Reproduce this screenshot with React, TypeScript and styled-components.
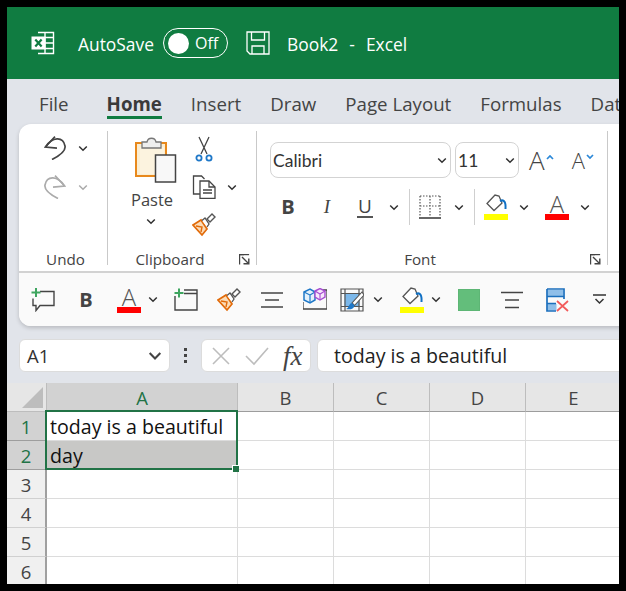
import React from "react";
import styled, { createGlobalStyle } from "styled-components";

const Global = createGlobalStyle`
  html, body { margin: 0; padding: 0; background: #000; }
  * { box-sizing: border-box; }
`;

const UI = `"Open Sans", "Noto Sans", "Liberation Sans", sans-serif`;

const Page = styled.div`
  width: 626px; height: 591px; background: #000; padding: 7px;
  font-family: ${UI}; color: #333;
`;
const Window = styled.div`
  width: 612px; height: 577px; overflow: hidden; background: #e1e4ea;
  display: flex; flex-direction: column;
`;
const TitleBar = styled.div`
  height: 72px; flex: none; background: #107c41; color: #fff; display: flex; align-items: center; padding-left: 24px;
`;
const TitleText = styled.span<{ $ml: number }>`
  font-size: 17.4px; margin-left: ${p => p.$ml}px; white-space: pre; word-spacing: 1px; color: #fff; padding-top: 1px;
`;
const Toggle = styled.div`
  width: 65px; height: 30px; margin-left: 9px; border: 1px solid #fff; border-radius: 15px;
  display: flex; align-items: center; padding-left: 4px; gap: 6px; font-size: 16px;
`;
const Knob = styled.div`
  width: 21px; height: 21px; border-radius: 50%; background: #fff;
`;
const Tabs = styled.div`
  height: 45px; flex: none; display: flex; padding: 12px 0 0 32px; gap: 29px; align-items: flex-start;
`;
const Tab = styled.div<{ $active?: boolean; $ml?: number }>`
  font-size: 18.7px; line-height: 25px; height: 28px; white-space: nowrap; margin-left: ${p => p.$ml || 0}px;
  font-weight: ${p => (p.$active ? 700 : 400)}; color: ${p => (p.$active ? "#3a3a3a" : "#444")};
  border-bottom: ${p => (p.$active ? "3px solid #107c41" : "3px solid transparent")};
`;
const Ribbon = styled.div`
  flex: none; width: 640px; height: 202px; margin: 0 0 0 12px; background: #fff; border-radius: 12px 0 0 12px;
  box-shadow: 0 2px 4px rgba(0,0,0,.18); display: flex; flex-direction: column; overflow: hidden;
`;
const Groups = styled.div`
  height: 149px; flex: none; display: flex; padding-top: 7px; border-bottom: 2px solid #d2d2d2;
`;
const Group = styled.div<{ $w: number }>`
  width: ${p => p.$w}px; flex: none; height: 134px; border-right: 1px solid #c9c9c9; position: relative;
  display: flex; flex-direction: column;
`;
const GroupBody = styled.div`
  flex: 1; display: flex; min-height: 0;
`;
const GroupLabel = styled.div<{ $pr?: number; $pl?: number }>`
  height: 12px; flex: none; font-size: 15.2px; line-height: 12px; text-align: center; color: #444;
  padding-right: ${p => p.$pr || 0}px; padding-left: ${p => p.$pl || 0}px;
`;
const Launcher = styled.svg`
  position: absolute; right: 6px; bottom: 0; width: 11px; height: 11px;
`;
const Col = styled.div<{ $ml?: number; $w?: number; $gap?: number; $mt?: number; $start?: boolean }>`
  display: flex; flex-direction: column; align-items: ${p => (p.$start ? "flex-start" : "center")};
  margin-left: ${p => p.$ml || 0}px; margin-top: ${p => p.$mt || 0}px;
  ${p => (p.$w ? `width: ${p.$w}px;` : "")} gap: ${p => p.$gap || 0}px;
`;
const Row = styled.div<{ $h?: number; $ml?: number; $mt?: number }>`
  display: flex; align-items: center;
  ${p => (p.$h ? `height: ${p.$h}px;` : "")}
  margin-left: ${p => p.$ml || 0}px; margin-top: ${p => p.$mt || 0}px;
`;
const Slot = styled.div<{ $ml?: number; $w?: number }>`
  flex: none; display: flex; align-items: center; justify-content: center;
  margin-left: ${p => p.$ml || 0}px; ${p => (p.$w ? `width: ${p.$w}px;` : "")}
`;
const PasteLabel = styled.div`
  font-size: 16.5px; line-height: 22px; color: #444; margin: 6px 8px 0 0;
`;
const PasteChevron = styled.div`
  margin: 7px 10px 0 0; display: flex;
`;
const Select = styled.div<{ $w: number; $ml?: number }>`
  width: ${p => p.$w}px; height: 36px; margin-left: ${p => p.$ml || 0}px; border: 1px solid #d3d3d3; border-radius: 8px; background: #fff;
  display: flex; align-items: center; justify-content: space-between; padding: 0 3px 0 2px;
  font-family: Lato, "Liberation Sans", sans-serif; font-size: 17.5px; color: #333; flex: none;
`;
const BigA = styled.span<{ $size: number }>`
  font-size: ${p => p.$size}px; line-height: 1; color: #444; font-weight: 300; font-family: ${UI};
`;
const Caret = styled.span`
  display: inline-block; margin-left: 1px; margin-bottom: 12px;
`;
const Style = styled.span<{ $b?: boolean; $i?: boolean; $u?: boolean }>`
  font-size: ${p => (p.$b ? 20 : 19)}px; line-height: 22px; color: #444; font-family: ${p => (p.$i ? `"Liberation Serif", serif` : UI)};
  font-weight: ${p => (p.$b ? 700 : 400)}; font-style: ${p => (p.$i ? "italic" : "normal")};
  ${p => (p.$u ? "border-bottom: 2px solid #555; padding: 0 1px; line-height: 19px;" : "")}
`;
const Sep = styled.div<{ $ml: number }>`
  width: 1px; height: 36px; background: #cfcfcf; margin-left: ${p => p.$ml}px; flex: none;
`;
const ColorIcon = styled.div`
  width: 24px; height: 26px; display: flex; flex-direction: column; align-items: center; justify-content: flex-end;
`;
const ColorBar = styled.div<{ $c: string }>`
  width: 24px; height: 6px; background: ${p => p.$c}; flex: none;
`;
const ColorA = styled.span`
  font-size: 24px; line-height: 20px; color: #555; font-weight: 300;
`;
const Qat = styled.div`
  flex: 1; background: #fafafa; display: flex; align-items: center; padding: 0 0 0 12px;
`;
const GreenSwatch = styled.div`
  width: 22px; height: 22px; background: #63be7b; border: 1px solid #5db675;
`;
const FormulaRow = styled.div`
  flex: none; height: 33px; margin: 13px 0 0 12px; display: flex; align-items: stretch;
`;
const NameBox = styled.div`
  width: 151px; flex: none; background: #fff; border: 1px solid #dcdcdc; border-radius: 6px; display: flex; align-items: center;
  justify-content: space-between; padding: 0 7px; font-size: 18.5px; color: #333;
`;
const DotsBox = styled.div`
  width: 31px; flex: none; display: flex; flex-direction: column; align-items: center; justify-content: center; gap: 3px;
`;
const Dot = styled.span`
  width: 3px; height: 3px; background: #444;
`;
const FnBox = styled.div`
  width: 110px; flex: none; background: #fff; border: 1px solid #dcdcdc; border-radius: 6px; display: flex; align-items: center; padding-left: 9px; gap: 14px;
`;
const Fx = styled.span`
  font-family: "Liberation Serif", serif; font-style: italic; font-size: 27px; line-height: 26px; color: #444;
`;
const FormulaInput = styled.div`
  width: 320px; flex: none; margin-left: 6px; background: #fff; border: 1px solid #dcdcdc; border-radius: 6px 0 0 6px;
  font-size: 19.6px; color: #222; display: flex; align-items: center; padding-left: 16px; white-space: nowrap;
`;
const Sheet = styled.div`
  flex: none; margin-top: 11px; position: relative; display: grid;
  grid-template-columns: 40px 191px 96px 96px 96px 96px;
  grid-template-rows: 29px repeat(6, 29px);
  background: #fff;
`;
const Corner = styled.div`
  background: #e6e6e6; border-right: 1px solid #bdbdbd; border-bottom: 1px solid #bdbdbd; display: flex; align-items: flex-end; justify-content: flex-end; padding: 0 3px 3px 0;
`;
const ColHead = styled.div<{ $sel?: boolean }>`
  background: ${p => (p.$sel ? "#d2d2d2" : "#e6e6e6")}; border-right: 1px solid #bdbdbd; border-bottom: 1px solid #9d9d9d;
  color: ${p => (p.$sel ? "#217346" : "#444")}; font-size: 18.5px; text-align: center; line-height: 30px;
`;
const RowHead = styled.div<{ $sel?: boolean }>`
  background: ${p => (p.$sel ? "#d2d2d2" : "#f0f0f0")}; border-right: 2px solid ${p => (p.$sel ? "#217346" : "#a0a0a0")}; border-bottom: 1px solid ${p => (p.$sel ? "#9e9e9e" : "#d0d0d0")};
  color: ${p => (p.$sel ? "#217346" : "#444")}; font-size: 18.5px; text-align: center; line-height: 29px;
`;
const Cell = styled.div<{ $fill?: boolean }>`
  background: ${p => (p.$fill ? "#c8c8c6" : "#fff")}; border-right: 1px solid #dcdcdc; border-bottom: 1px solid #dcdcdc;
  font-size: 19.6px; line-height: 29px; color: #111; padding-left: 3px; white-space: nowrap; overflow: hidden;
`;
const Selection = styled.div`
  position: absolute; left: 38px; top: 27px; width: 193px; height: 60px; border: 2px solid #217346; pointer-events: none;
`;
const Handle = styled.div`
  position: absolute; right: -3px; bottom: -4px; background: #217346; border-left: 1px solid #fff; border-top: 1px solid #fff;
  box-sizing: content-box; width: 6px; height: 6px;
`;

const Chev = ({ c = "#333", w = 10 }: { c?: string; w?: number }) => (
  <svg width={w} height={w * 0.7} viewBox="0 0 10 7" fill="none"><path d="M1.2 1.5 5 5.3 8.8 1.5" stroke={c} strokeWidth="1.5" /></svg>
);
const Excel = () => (
  <svg width="24" height="24" viewBox="0 0 24 24" fill="none">
    <path d="M7 1.500h15.500v21H7" stroke="#fff" strokeWidth="1.4" />
    <path d="M14 1.500v21M14 6.500h8.500M14 12h8.500M14 17.500h8.500" stroke="#fff" strokeWidth="1.4" />
    <rect x="0.5" y="5.5" width="14" height="13" fill="#fff" />
    <path d="M4.300 8.500 10.600 15.500M10.600 8.500 4.300 15.500" stroke="#107c41" strokeWidth="2.2" />
  </svg>
);
const Save = () => (
  <svg width="24" height="24" viewBox="0 0 24 24" fill="none" stroke="#fff" strokeWidth="1.3">
    <path d="M1 1h22v22H4l-3-3z" />
    <path d="M5.500 1v8h13V1M6 23v-8h12v8" />
  </svg>
);
const Undo = ({ flip, c }: { flip?: boolean; c: string }) => (
  <svg width="22" height="24" viewBox="0 0 22 24" fill="none" stroke={c} strokeWidth="1.7" style={flip ? { transform: "scaleX(-1)" } : undefined}>
    <path d="M11 0.600 1.300 11l11.700 1.200" />
    <path d="M2 10.500C8 1 19 0 21 10c1 5-6 10-13 13.500" />
  </svg>
);
const Launch = () => (
  <Launcher viewBox="0 0 11 11" fill="none" stroke="#444" strokeWidth="1.2">
    <path d="M5 .6H.6V10.500" /><path d="M3 3l6.500 6.500M9.800 4.500v5.300H4.500" strokeWidth="1.4" /><path d="M.6 .6h9.500" />
  </Launcher>
);
const Paste = () => (
  <svg width="42" height="46" viewBox="0 0 42 46" fill="none">
    <rect x="1" y="6" width="30" height="33" fill="#fbeed2" stroke="#e8891c" strokeWidth="2" />
    <rect x="5" y="10" width="24" height="27" fill="#fff" opacity=".3" />
    <path d="M7 5h5c1-5 8-5 9 0h5v6H7z" fill="#eee" stroke="#777" strokeWidth="1.3" />
    <rect x="20.500" y="18" width="20" height="27" fill="#f8f8f8" stroke="#444" strokeWidth="1.5" />
  </svg>
);
const Scissors = () => (
  <svg width="18" height="26" viewBox="0 0 18 26" fill="none">
    <path d="M4 1l8 17M14 1 6 18" stroke="#444" strokeWidth="1.3" />
    <circle cx="4" cy="22" r="2.6" stroke="#1f78c8" strokeWidth="1.8" />
    <circle cx="14" cy="22" r="2.6" stroke="#1f78c8" strokeWidth="1.8" />
  </svg>
);
const Copy = () => (
  <svg width="24" height="24" viewBox="0 0 24 24" fill="none" stroke="#444" strokeWidth="1.3">
    <path d="M9 19H1.500V1H9.500l3 3" />
    <path d="M8 6h9l6 6v11.300H8z" fill="#fff" />
    <path d="M17 6v6h6M11 15h9M11 18h9" />
  </svg>
);
const Brush = () => (
  <svg width="24" height="24" viewBox="0 0 24 24" fill="none">
    <path d="M1 12l8-5 6 9-5 6z" fill="#fbdcb8" stroke="#e26b0a" strokeWidth="1.7" />
    <path d="M4 13l6 1-1 5" stroke="#e26b0a" strokeWidth="1.4" />
    <path d="M10 7.500 13 5l4 6-2 3" fill="#fff" stroke="#555" strokeWidth="1.3" />
    <path d="M15 6l5-5 3 3-5 5z" fill="#fff" stroke="#555" strokeWidth="1.4" />
  </svg>
);
const Borders = () => (
  <svg width="22" height="24" viewBox="0 0 22 24" fill="none">
    <path d="M1 1h20M1 1v20M21 1v20M11 1v20M1 11h20" stroke="#555" strokeWidth="1.2" strokeDasharray="1.5 1.500" />
    <path d="M0 23h22" stroke="#333" strokeWidth="1.6" />
  </svg>
);
const Fill = () => (
  <svg width="24" height="20" viewBox="0 0 24 20" fill="none">
    <path d="M11 1 3 9.500l7 7 8-7.500-3-7z" fill="#fff" stroke="#555" strokeWidth="1.3" />
    <path d="M16 7c4-2 6 1 5.500 8" stroke="#1070c4" strokeWidth="2" />
  </svg>
);
const Comment = () => (
  <svg width="24" height="24" viewBox="0 0 24 24" fill="none">
    <path d="M9 3.500h14v14H9l-4 5v-5H2v-7" stroke="#444" strokeWidth="1.4" />
    <path d="M5 0v9M.5 4.500h9" stroke="#3ea55f" strokeWidth="2" />
  </svg>
);
const NewSheet = () => (
  <svg width="24" height="24" viewBox="0 0 24 24" fill="none">
    <path d="M10 2h13v20H1V8" stroke="#444" strokeWidth="1.4" />
    <path d="M10 5.500h13" stroke="#444" strokeWidth="1.4" />
    <path d="M5 .5v9M.5 5h9" stroke="#3ea55f" strokeWidth="2" />
  </svg>
);
const Lines = ({ narrow }: { narrow?: boolean }) => (
  <svg width="22" height="22" viewBox="0 0 22 22" fill="none" stroke="#444" strokeWidth="1.5">
    {narrow ? <path d="M0 4h22M4 11h14M0 18h22" /> : <path d="M0 3.500h22M4 11h14M4 18.500h14" />}
  </svg>
);
const Cube = () => (
  <svg width="24" height="24" viewBox="0 0 24 24" fill="none">
    <path d="M0 14v7h24V2h-6" stroke="#444" strokeWidth="1.3" />
    <path d="M1 4l6-3 5 3v8l-5 3-6-3z" fill="#e4f1fb" stroke="#1f78c8" strokeWidth="1.5" />
    <path d="M1 4l6 3v8M7 7l5-3" stroke="#1f78c8" strokeWidth="1.2" />
    <path d="M12 3l5-2.500 5 2.500v6l-5 3-5-3z" fill="#f7e7fb" stroke="#a64dd1" strokeWidth="1.4" />
    <path d="M12 3l5 3 5-3M17 6v6" stroke="#a64dd1" strokeWidth="1.1" />
  </svg>
);
const TableBrush = () => (
  <svg width="24" height="24" viewBox="0 0 24 24" fill="none">
    <rect x="4.500" y="5" width="15" height="13" fill="#7cb8ea" />
    <path d="M1 1h22v22H1zM1 5.500h22M5 1v22M19 1v22M1 18.500h22" stroke="#555" strokeWidth="1.2" />
    <path d="M22 4 12 15l2.500 2.500L24 7z" fill="#fff" stroke="#555" strokeWidth="1.1" />
    <path d="M12 15c-3 0-3 5-6 6 4 1 8 0 8.500-3.500z" fill="#1f78c8" />
  </svg>
);
const DeleteRows = () => (
  <svg width="24" height="24" viewBox="0 0 24 24" fill="none">
    <rect x="1.500" y="2" width="15.500" height="6.500" fill="#8fbfe9" />
    <rect x="1.500" y="16" width="9" height="6.500" fill="#8fbfe9" />
    <path d="M1 1h17v10M1 1v22h9M1 8.500h17M1 15.500h9" stroke="#1b6fbd" strokeWidth="1.7" />
    <path d="M11 13l11 10M22 13 11 23" stroke="#f25a5a" strokeWidth="1.7" />
  </svg>
);
const Overflow = () => (
  <svg width="13" height="11" viewBox="0 0 13 11" fill="none" stroke="#333" strokeWidth="1.5">
    <path d="M0 1h13M2.500 5l4 4 4-4" />
  </svg>
);
const X = () => (
  <svg width="20" height="20" viewBox="0 0 20 20" fill="none" stroke="#bdbdbd" strokeWidth="1.6"><path d="M2 2l16 16M18 2 2 18" /></svg>
);
const Check = () => (
  <svg width="24" height="20" viewBox="0 0 24 20" fill="none" stroke="#bdbdbd" strokeWidth="1.6"><path d="M1 10l8 8L23 2" /></svg>
);
const CornerTri = () => (
  <svg width="21" height="21" viewBox="0 0 21 21"><path d="M21 0v21H0z" fill="#bdbdbd" /></svg>
);

const rows = [1, 2, 3, 4, 5, 6];
const cols = ["B", "C", "D", "E"];

export default function App() {
  return (
    <Page>
      <Global />
      <Window>
        <TitleBar>
          <Excel />
          <TitleText $ml={23}>AutoSave</TitleText>
          <Toggle><Knob /><span>Off</span></Toggle>
          <Slot $ml={18}><Save /></Slot>
          <TitleText $ml={17}>Book2  -  Excel</TitleText>
        </TitleBar>
        <Tabs>
          {["File", "Home", "Insert", "Draw", "Page Layout", "Formulas", "Data"].map(t => (
            <Tab key={t} $active={t === "Home"} $ml={t === "Home" ? 9 : 0}>{t}</Tab>
          ))}
        </Tabs>
        <Ribbon>
          <Groups>
            <Group $w={89}>
              <GroupBody>
                <Col $ml={25} $mt={5} $gap={13} $start>
                  <Row $h={24}><Undo c="#444" /><Slot $ml={12}><Chev /></Slot></Row>
                  <Row $h={24} $mt={2}><Undo flip c="#ababab" /><Slot $ml={12}><Chev c="#ababab" /></Slot></Row>
                </Col>
              </GroupBody>
              <GroupLabel $pl={5}>Undo</GroupLabel>
            </Group>
            <Group $w={149}>
              <GroupBody>
                <Col $ml={27} $mt={6} $w={42}>
                  <Paste />
                  <PasteLabel>Paste</PasteLabel>
                  <PasteChevron><Chev /></PasteChevron>
                </Col>
                <Col $ml={15} $mt={5} $gap={13} $start>
                  <Row $h={26}><Slot $ml={3}><Scissors /></Slot></Row>
                  <Row $h={24}><Copy /><Slot $ml={11}><Chev /></Slot></Row>
                  <Row $h={24} $mt={1}><Brush /></Row>
                </Col>
              </GroupBody>
              <GroupLabel $pr={24}>Clipboard</GroupLabel>
              <Launch />
            </Group>
            <Group $w={351}>
              <GroupBody>
                <Col $start>
                  <Row $mt={11} $ml={13}>
                    <Select $w={181}><span>Calibri</span><Chev /></Select>
                    <Select $w={64} $ml={4}><span>11</span><Chev /></Select>
                    <Slot $ml={10}><BigA $size={26}>A</BigA><Caret><svg width="8" height="6" viewBox="0 0 8 6" fill="none" stroke="#2b88d8" strokeWidth="1.7"><path d="M1 5l3-3 3 3" /></svg></Caret></Slot>
                    <Slot $ml={18}><BigA $size={22}>A</BigA><Caret><svg width="8" height="6" viewBox="0 0 8 6" fill="none" stroke="#2b88d8" strokeWidth="1.7"><path d="M1 1l3 3 3-3" /></svg></Caret></Slot>
                  </Row>
                  <Row $h={36} $mt={11} $ml={23}>
                    <Slot $w={16}><Style $b>B</Style></Slot>
                    <Slot $w={16} $ml={23}><Style $i>I</Style></Slot>
                    <Slot $w={16} $ml={22}><Style $u>U</Style></Slot>
                    <Slot $ml={16}><Chev /></Slot>
                    <Sep $ml={10} />
                    <Slot $ml={9}><Borders /></Slot>
                    <Slot $ml={13}><Chev /></Slot>
                    <Sep $ml={10} />
                    <Slot $ml={9}><ColorIcon><Fill /><ColorBar $c="#ffff00" /></ColorIcon></Slot>
                    <Slot $ml={11}><Chev /></Slot>
                    <Slot $ml={16}><ColorIcon><ColorA>A</ColorA><ColorBar $c="#ff0000" /></ColorIcon></Slot>
                    <Slot $ml={11}><Chev /></Slot>
                  </Row>
                </Col>
              </GroupBody>
              <GroupLabel $pr={24}>Font</GroupLabel>
              <Launch />
            </Group>
          </Groups>
          <Qat>
            <Comment />
            <Slot $w={16} $ml={23}><Style $b>B</Style></Slot>
            <Slot $ml={23}><ColorIcon><ColorA>A</ColorA><ColorBar $c="#ff0000" /></ColorIcon></Slot>
            <Slot $ml={7}><Chev /></Slot>
            <Slot $ml={16}><NewSheet /></Slot>
            <Slot $ml={19}><Brush /></Slot>
            <Slot $ml={20}><Lines narrow /></Slot>
            <Slot $ml={20}><Cube /></Slot>
            <Slot $ml={13}><TableBrush /></Slot>
            <Slot $ml={9}><Chev /></Slot>
            <Slot $ml={17}><ColorIcon><Fill /><ColorBar $c="#ffff00" /></ColorIcon></Slot>
            <Slot $ml={7}><Chev /></Slot>
            <Slot $ml={17}><GreenSwatch /></Slot>
            <Slot $ml={21}><Lines /></Slot>
            <Slot $ml={23}><DeleteRows /></Slot>
            <Slot $ml={23}><Overflow /></Slot>
          </Qat>
        </Ribbon>
        <FormulaRow>
          <NameBox><span>A1</span><Chev w={14} c="#444" /></NameBox>
          <DotsBox><Dot /><Dot /><Dot /></DotsBox>
          <FnBox><X /><Check /><Fx>fx</Fx></FnBox>
          <FormulaInput>today is a beautiful</FormulaInput>
        </FormulaRow>
        <Sheet>
          <Corner><CornerTri /></Corner>
          <ColHead $sel>A</ColHead>
          {cols.map(c => <ColHead key={c}>{c}</ColHead>)}
          {rows.map(r => (
            <React.Fragment key={r}>
              <RowHead $sel={r <= 2}>{r}</RowHead>
              <Cell $fill={r === 2}>{r === 1 ? "today is a beautiful" : r === 2 ? "day" : ""}</Cell>
              {cols.map(c => <Cell key={c} />)}
            </React.Fragment>
          ))}
          <Selection><Handle /></Selection>
        </Sheet>
      </Window>
    </Page>
  );
}
